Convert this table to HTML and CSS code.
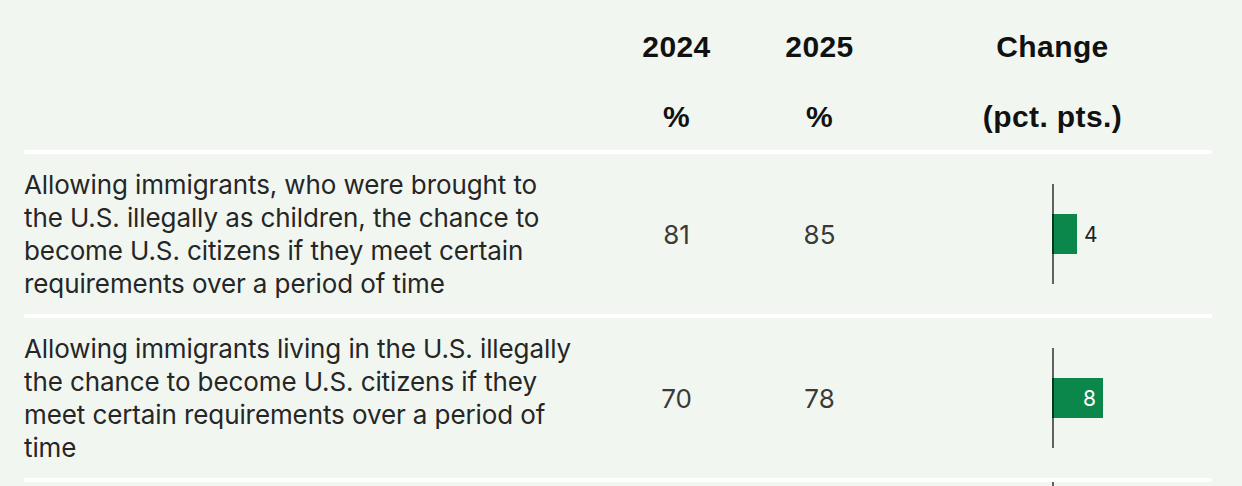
FILE: index.html
```html
<!DOCTYPE html>
<html lang="en">
<head>
<meta charset="utf-8">
<title>Immigration policy support</title>
<link rel="stylesheet" href="styles.css">
</head>
<body>
<div class="table">
  <div class="row head">
    <div class="cell label"></div>
    <div class="cell hcol"><span>2024</span><span>%</span></div>
    <div class="cell hcol"><span>2025</span><span>%</span></div>
    <div class="cell hcol chg"><span>Change</span><span>(pct. pts.)</span></div>
  </div>
  <div class="row body">
    <div class="cell label">Allowing immigrants, who were brought to the U.S. illegally as children, the chance to become U.S. citizens if they meet certain requirements over a period of time</div>
    <div class="cell num">81</div>
    <div class="cell num">85</div>
    <div class="cell chart">
      <div class="plot">
        <div class="axis"></div>
        <div class="barwrap"><div class="bar" style="width:25px"></div><span class="out">4</span></div>
      </div>
    </div>
  </div>
  <div class="row body">
    <div class="cell label">Allowing immigrants living in the U.S. illegally the chance to become U.S. citizens if they meet certain requirements over a period of time</div>
    <div class="cell num">70</div>
    <div class="cell num">78</div>
    <div class="cell chart">
      <div class="plot">
        <div class="axis"></div>
        <div class="barwrap"><div class="bar" style="width:51px"><span class="in">8</span></div></div>
      </div>
    </div>
  </div>
  <div class="row body last">
    <div class="cell label"></div>
    <div class="cell num"></div>
    <div class="cell num"></div>
    <div class="cell chart top">
      <div class="plot">
        <div class="axis"></div>
      </div>
    </div>
  </div>
</div>
</body>
</html>
```
FILE: styles.css
```css
html, body {
  margin: 0;
  padding: 0;
  background: #f1f7f0;
}
body {
  font-family: Inter, "Noto Sans", sans-serif;
  color: #222;
  overflow: hidden;
  height: 486px;
}
.table {
  margin-left: 24px;
  width: 1188px;
}
.row {
  display: grid;
  grid-template-columns: 581px 143px 143px 321px;
}
.head {
  height: 150px;
  box-sizing: border-box;
  padding-top: 12px;
}
.hcol {
  display: flex;
  flex-direction: column;
  align-items: center;
  font-family: "Liberation Sans", Arial, sans-serif;
  font-weight: 700;
  font-size: 30px;
  letter-spacing: 0.4px;
  line-height: 70px;
  color: #111;
  height: 138px;
  overflow: visible;
}
.hcol.chg {
  transform: translateX(1px);
}
.body {
  border-top: 4px solid #fff;
  height: 160px;
}
.label {
  font-size: 26px;
  line-height: 33px;
  letter-spacing: -0.1px;
  color: #262626;
  padding-top: 14px;
  padding-right: 31px;
}
.num {
  display: flex;
  align-items: center;
  justify-content: center;
  font-size: 26px;
  color: #3a3a3a;
}
.chart {
  display: grid;
  grid-template-columns: 161px 1fr;
  align-items: center;
}
.plot {
  grid-column: 2;
  display: grid;
  align-items: center;
}
.axis, .barwrap {
  grid-area: 1 / 1;
}
.axis {
  width: 2px;
  height: 100px;
  background: rgba(0, 0, 0, 0.6);
  z-index: 1;
}
.barwrap {
  display: flex;
  align-items: center;
}
.bar {
  height: 40px;
  background: #0b874b;
  display: flex;
  align-items: center;
  justify-content: flex-end;
  box-sizing: border-box;
  padding-right: 7px;
}
.out {
  margin-left: 7px;
  font-size: 21px;
  color: #222;
}
.in {
  font-size: 21px;
  color: #fff;
}
.chart.top {
  align-items: start;
}
.chart.top .plot {
  align-items: start;
}
```
